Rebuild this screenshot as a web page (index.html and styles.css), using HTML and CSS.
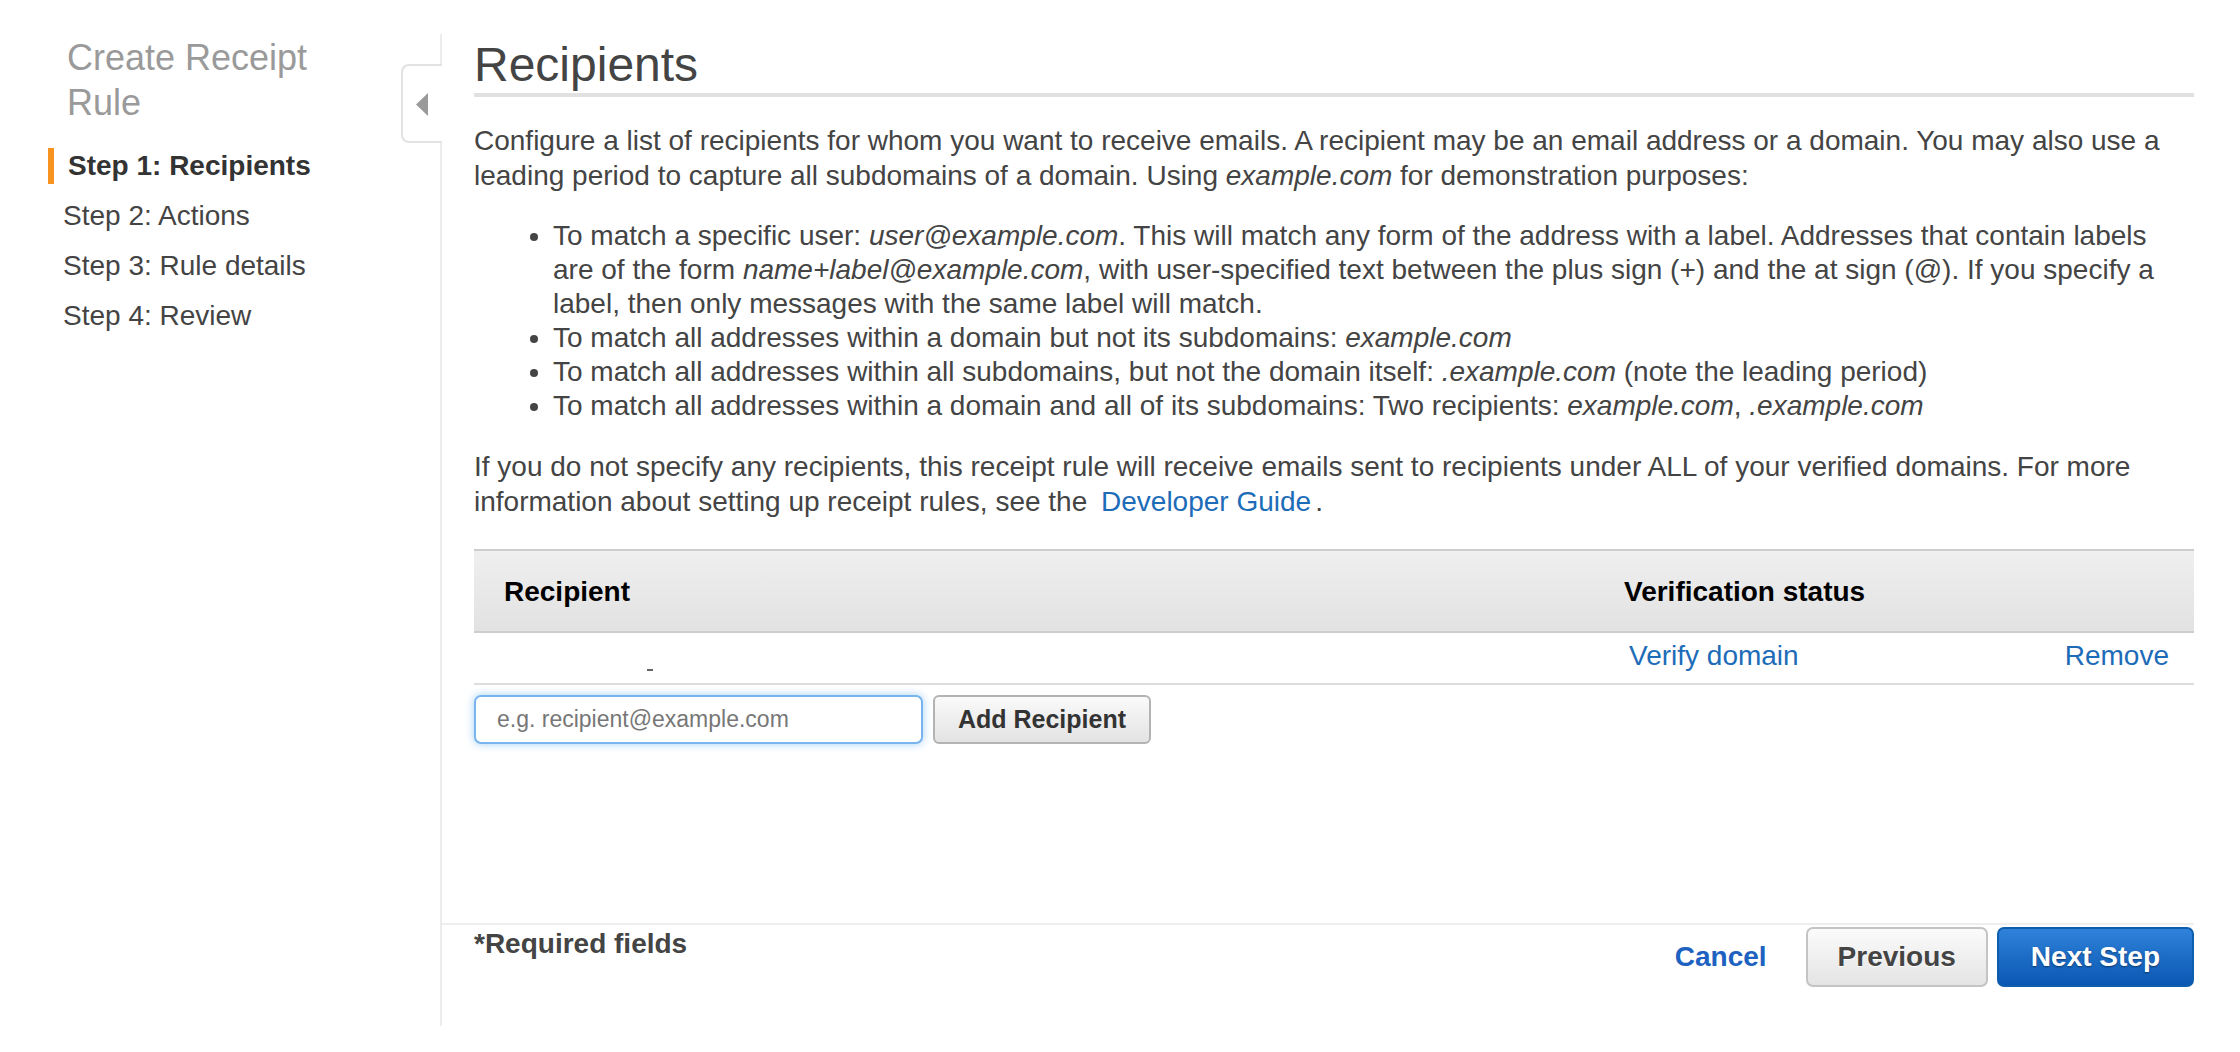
FILE: index.html
```html
<!DOCTYPE html>
<html lang="en">
<head>
<meta charset="utf-8">
<title>Create Receipt Rule</title>
<link rel="stylesheet" href="styles.css">
</head>
<body>
<div class="page">
  <aside class="sidebar">
    <h2 class="side-title">Create Receipt Rule</h2>
    <ul class="steps">
      <li class="step active">Step 1: Recipients</li>
      <li class="step">Step 2: Actions</li>
      <li class="step">Step 3: Rule details</li>
      <li class="step">Step 4: Review</li>
    </ul>
  </aside>
  <main class="main">
    <div class="collapse-tab">
      <svg width="12" height="23" viewBox="0 0 12 23"><polygon points="12,0 12,23 0,11.5" fill="#9a9a9a"/></svg>
    </div>
    <h1 class="heading">Recipients</h1>
    <p class="text">Configure a list of recipients for whom you want to receive emails. A recipient may be an email address or a domain. You may also use a leading period to capture all subdomains of a domain. Using <i>example.com</i> for demonstration purposes:</p>
    <ul class="bullets">
      <li>To match a specific user: <i>user@example.com</i>. This will match any form of the address with a label. Addresses that contain labels are of the form <i>name+label@example.com</i>, with user-specified text between the plus sign (+) and the at sign (@). If you specify a label, then only messages with the same label will match.</li>
      <li>To match all addresses within a domain but not its subdomains: <i>example.com</i></li>
      <li>To match all addresses within all subdomains, but not the domain itself: <i>.example.com</i> (note the leading period)</li>
      <li>To match all addresses within a domain and all of its subdomains: Two recipients: <i>example.com</i>, <i>.example.com</i></li>
    </ul>
    <p class="text">If you do not specify any recipients, this receipt rule will receive emails sent to recipients under ALL of your verified domains. For more information about setting up receipt rules, see the <a class="link guide" href="#">Developer Guide</a><span class="dot">.</span></p>

    <div class="rtable">
      <div class="rhead">
        <div class="hcell first">Recipient</div>
        <div class="hcell">Verification status</div>
        <div class="hcell"></div>
      </div>
      <div class="rrow">
        <div class="cell first"><span class="dash"></span></div>
        <div class="cell verify"><a class="link" href="#">Verify domain</a></div>
        <div class="cell remove"><a class="link" href="#">Remove</a></div>
      </div>
    </div>

    <div class="add-row">
      <input class="recipient-input" type="text" placeholder="e.g. recipient@example.com">
      <button class="btn-add" type="button">Add Recipient</button>
    </div>

    <footer class="footer">
      <div class="required">*Required fields</div>
      <div class="actions">
        <a class="cancel" href="#">Cancel</a>
        <button class="btn-prev" type="button">Previous</button>
        <button class="btn-next" type="button">Next Step</button>
      </div>
    </footer>
  </main>
</div>
</body>
</html>
```

FILE: styles.css
```css
* { box-sizing: border-box; }

html, body {
  margin: 0;
  padding: 0;
  background: #fff;
}

body {
  width: 2240px;
  height: 1052px;
  font-family: "Liberation Sans", Arial, Helvetica, sans-serif;
  color: #444;
  font-size: 28px;
  overflow: hidden;
}

.page {
  display: flex;
  padding-top: 34px;
}

/* Sidebar */
.sidebar {
  width: 440px;
  flex: none;
}

.side-title {
  margin: 1px 0 0 67px;
  width: 260px;
  font-size: 36px;
  line-height: 45px;
  font-weight: normal;
  color: #9a9a9a;
}

.steps {
  list-style: none;
  margin: 16px 0 0 0;
  padding: 0;
}

.step {
  display: flex;
  align-items: center;
  height: 50px;
  line-height: 50px;
  padding-left: 63px;
  font-size: 28px;
  color: #444;
}

.step.active {
  padding-left: 48px;
  font-weight: bold;
  color: #333;
}

.step.active::before {
  content: "";
  width: 6px;
  height: 36px;
  background: #f7931e;
  margin-right: 14px;
}

/* Main */
.main {
  flex: 1;
  position: relative;
  height: 992px;
  border-left: 2px solid #ececec;
  padding: 3px 46px 0 32px;
  display: flex;
  flex-direction: column;
}

.collapse-tab {
  position: absolute;
  left: -41px;
  top: 30px;
  width: 41px;
  height: 79px;
  background: #fff;
  border: 2px solid #e2e2e2;
  border-right: none;
  border-radius: 8px 0 0 8px;
  display: flex;
  align-items: center;
  padding-left: 13px;
  padding-top: 2px;
}

.heading {
  margin: 0;
  font-size: 48px;
  line-height: 56px;
  font-weight: normal;
  color: #444;
  border-bottom: 4px solid #e1e1e1;
}

.text {
  margin: 26px 0 0 0;
  font-size: 28px;
  line-height: 35px;
}

.bullets {
  margin: 26px 0 0 0;
  padding-left: 79px;
  font-size: 28px;
  line-height: 34px;
}

.link {
  color: #1d6cb8;
  text-decoration: none;
}

.guide {
  margin-left: 6px;
}

.dot {
  margin-left: 4px;
}

/* Table */
.rtable {
  margin-top: 30px;
  border-top: 2px solid #cdcdcd;
}

.rhead,
.rrow {
  display: grid;
  grid-template-columns: 1120px 1fr auto;
  align-items: center;
}

.rhead {
  height: 82px;
  padding-top: 2px;
  background: linear-gradient(#efefef, #e2e2e2);
  border-bottom: 2px solid #cdcdcd;
  font-weight: bold;
  color: #000;
  line-height: 34px;
}

.hcell { padding-left: 30px; }

.rrow {
  height: 52px;
  padding-bottom: 4px;
  border-bottom: 2px solid #dddddd;
  line-height: 34px;
}

.cell.first { padding-left: 30px; height: 34px; }
.cell.verify { padding-left: 35px; }
.cell.remove { padding-right: 25px; }

.dash {
  display: inline-block;
  width: 6px;
  height: 2px;
  background: #666;
  margin-left: 143px;
  vertical-align: -6px;
}

/* Add row */
.add-row {
  display: flex;
  gap: 10px;
  margin-top: 10px;
}

.recipient-input {
  width: 449px;
  height: 49px;
  border: 2px solid #78b4ee;
  border-radius: 7px;
  box-shadow: 0 0 8px rgba(82, 168, 236, 0.55);
  padding: 0 0 0 21px;
  font-family: inherit;
  font-size: 23px;
  color: #444;
  outline: none;
}

.recipient-input::placeholder {
  color: #777;
}

.btn-add {
  width: 218px;
  height: 49px;
  border: 2px solid #b3b3b3;
  border-radius: 6px;
  background: linear-gradient(#fafafa, #e3e3e3);
  font-family: inherit;
  font-size: 25px;
  font-weight: bold;
  color: #333;
  padding: 0;
}

/* Footer */
.footer {
  margin-top: auto;
  margin-left: -32px;
  padding: 2px 0 39px 32px;
  border-top: 2px solid #eeeeee;
  display: flex;
  justify-content: space-between;
  align-items: flex-start;
}

.required {
  font-weight: bold;
  font-size: 28px;
  line-height: 34px;
  color: #444;
}

.actions {
  display: flex;
  align-items: center;
}

.cancel {
  font-weight: bold;
  font-size: 28px;
  color: #1d62c0;
  text-decoration: none;
  margin-right: 39px;
}

.btn-prev,
.btn-next {
  height: 60px;
  border-radius: 7px;
  font-family: inherit;
  font-size: 28px;
  font-weight: bold;
}

.btn-prev {
  padding: 0 30px;
  margin-right: 9px;
  border: 2px solid #c4c4c4;
  background: linear-gradient(#fbfbfb, #e4e4e4);
  color: #444;
  text-shadow: 0 1px 0 #fff;
}

.btn-next {
  padding: 0 32px;
  border: 2px solid #0f5dae;
  background: linear-gradient(#2f82da, #0a57b2);
  color: #fff;
  text-shadow: 0 1px 2px rgba(0, 0, 0, 0.45);
}
```
